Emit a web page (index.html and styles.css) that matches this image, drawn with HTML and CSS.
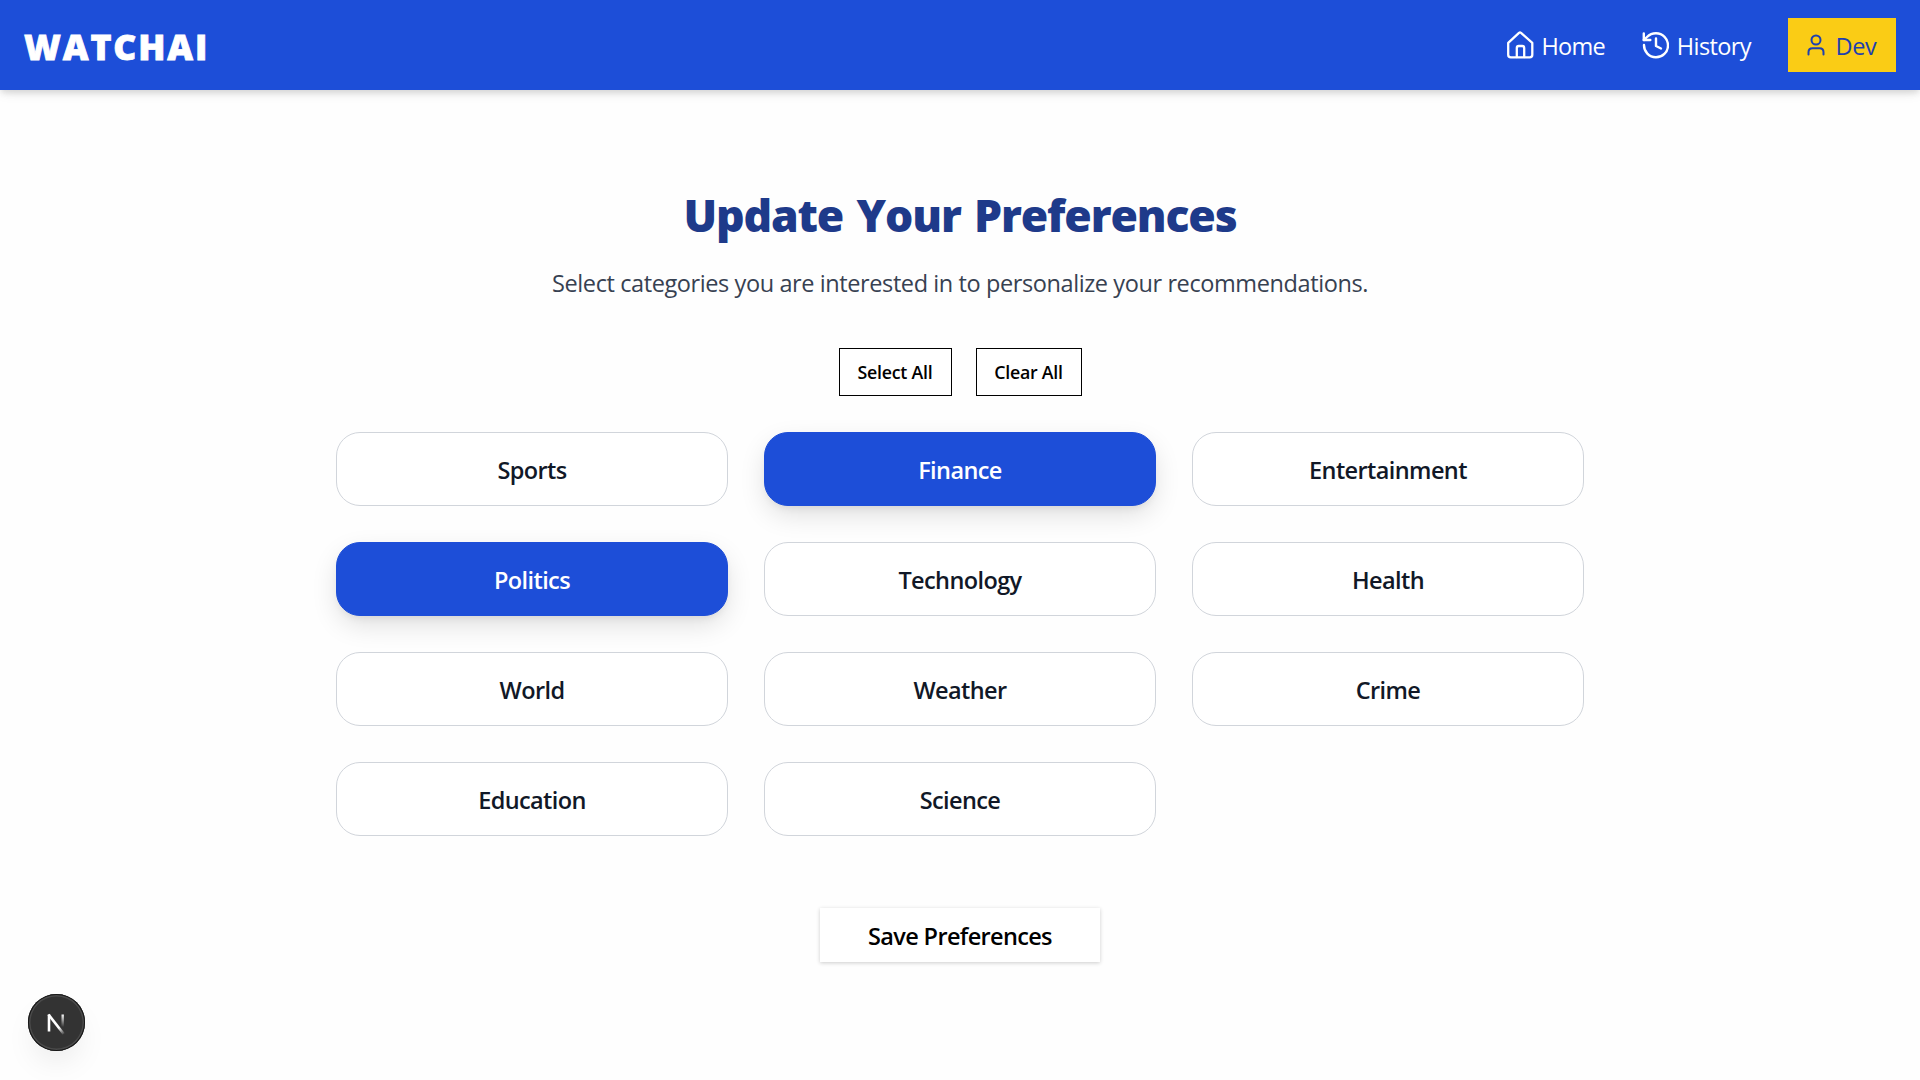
FILE: index.html
```html
<!DOCTYPE html>
<html lang="en">
<head>
<meta charset="utf-8">
<title>WatchAI</title>
<link rel="stylesheet" href="styles.css">
</head>
<body>
<header class="navbar">
  <a class="brand">WATCHAI</a>
  <nav class="nav-links">
    <a class="nav-link home">
      <svg class="nav-icon" viewBox="0 0 27 28" fill="none" stroke="currentColor" stroke-width="2.3" stroke-linecap="round" stroke-linejoin="round"><path d="M1.2 11.8 12 1.8q1-.8 2 0l11.300 10v12q0 2.600-2.600 2.600H3.800q-2.600 0-2.600-2.600z"/><path d="M9.800 26V17q0-2 2-2h3.400q2 0 2 2v9"/></svg>
      <span>Home</span>
    </a>
    <a class="nav-link history">
      <svg class="nav-icon" viewBox="0 0 27 28" fill="none" stroke="currentColor" stroke-width="2.400" stroke-linecap="round" stroke-linejoin="round"><path d="M2 14A12 12 0 1 0 14 2.300a13 13 0 0 0-9 3.700L1.800 9"/><path d="M1.800 2.500V9h6.500M14 7.500V15l5 2.500"/></svg>
      <span>History</span>
    </a>
    <a class="user-button">
      <svg class="user-icon" viewBox="0 0 18 22" fill="none" stroke="currentColor" stroke-width="2" stroke-linecap="round" stroke-linejoin="round"><circle cx="9" cy="6" r="4.500"/><path d="M1.500 20.500v-2.200q0-4 4-4h7q4 0 4 4v2.200"/></svg>
      <span>Dev</span>
    </a>
  </nav>
</header>
<main class="content">
  <h1 class="title">Update Your Preferences</h1>
  <p class="subtitle">Select categories you are interested in to personalize your recommendations.</p>
  <div class="bulk-actions">
    <button class="bulk-button select-all">Select All</button>
    <button class="bulk-button clear-all">Clear All</button>
  </div>
  <div class="categories">
    <button class="category">Sports</button>
    <button class="category selected">Finance</button>
    <button class="category">Entertainment</button>
    <button class="category selected">Politics</button>
    <button class="category">Technology</button>
    <button class="category">Health</button>
    <button class="category">World</button>
    <button class="category">Weather</button>
    <button class="category">Crime</button>
    <button class="category">Education</button>
    <button class="category">Science</button>
  </div>
  <button class="save">Save Preferences</button>
</main>
<div class="dev-badge">
  <svg viewBox="0 0 57 57" width="57" height="57" fill="none"><defs><linearGradient id="stem" x1="0" y1="20" x2="0" y2="33" gradientUnits="userSpaceOnUse"><stop stop-color="#fff"/><stop offset="1" stop-color="#fff" stop-opacity="0"/></linearGradient><linearGradient id="diag" x1="32" y1="33" x2="37" y2="40" gradientUnits="userSpaceOnUse"><stop stop-color="#fff"/><stop offset="1" stop-color="#fff" stop-opacity="0"/></linearGradient></defs><path d="M21 37.500V20.500" stroke="#fff" stroke-width="2.600"/><path d="M20.500 20.500 35.700 40" stroke="url(#diag)" stroke-width="2.600"/><path d="M33.500 20.500h2.400v13h-2.400z" fill="url(#stem)"/></svg>
</div>
</body>
</html>
```
FILE: styles.css
```css
* { box-sizing: border-box; }
body { margin: 0; height: 1080px; overflow: hidden; background: #fefefe; color: #111827; font-family: "Open Sans", "Noto Sans", sans-serif; }
button { font-family: inherit; padding: 0; }
.navbar { height: 90px; padding: 0 24px; display: flex; align-items: center; justify-content: space-between; background: #1d4ed8; color: #fff; box-shadow: 0 4px 6px -1px rgba(0,0,0,.1), 0 4px 12px -2px rgba(0,0,0,.1); }
.brand { font-size: 35.5px; font-weight: 800; line-height: 44px; padding-top: 2px; letter-spacing: 1.9px; -webkit-text-stroke: .8px #fff; }
.nav-links { display: flex; align-items: center; }
.nav-link { display: flex; align-items: center; gap: 7px; margin-right: 36px; font-size: 23.5px; letter-spacing: -.6px; }
.home { margin-right: 37px; letter-spacing: -.75px; }
.history { gap: 8px; margin-right: 37px; }
.nav-link span { padding-top: 2px; }
.nav-icon { width: 27px; height: 28px; }
.user-button { width: 108px; height: 54px; display: flex; align-items: center; justify-content: center; gap: 10px; background: #facc15; color: #1e40af; font-size: 23.5px; font-weight: 500; letter-spacing: -.3px; }
.user-button span { padding-top: 1px; }
.user-icon { width: 18px; height: 22px; }
.content { display: flex; flex-direction: column; align-items: center; padding-top: 95px; }
.title { margin: 0; font-size: 44.5px; line-height: 60px; font-weight: 800; letter-spacing: -1.15px; word-spacing: 3px; color: #1e3a8a; }
.subtitle { margin: 20px 0 0; font-size: 23.5px; line-height: 36px; letter-spacing: -.4px; color: #374151; }
.bulk-actions { display: flex; gap: 24px; margin-top: 47px; }
.bulk-button { height: 48px; background: #fff; border: 1px solid #000; color: #000; font-size: 17.8px; font-weight: 600; letter-spacing: -.25px; }
.select-all { width: 113px; }
.clear-all { width: 106px; }
.categories { display: grid; grid-template-columns: repeat(3, 392px); gap: 36px; margin-top: 36px; }
.category { height: 74px; padding-top: 2px; border: 1px solid #d1d5db; border-radius: 24px; background: #fff; color: #111827; font-size: 23.5px; font-weight: 600; letter-spacing: -.6px; }
.selected { border-color: #1d4ed8; background: #1d4ed8; color: #fff; box-shadow: 0 10px 28px -3px rgba(0,0,0,.14), 0 4px 10px -4px rgba(0,0,0,.1); }
.save { width: 280px; height: 54px; padding-top: 2px; margin-top: 72px; border: 0; background: #fff; color: #000; font-size: 23.5px; font-weight: 600; letter-spacing: -.65px; box-shadow: 0 1px 4px rgba(0,0,0,.2); }
.dev-badge { position: absolute; left: 28px; top: 994px; width: 57px; height: 57px; border-radius: 50%; background: #333; box-shadow: inset 0 0 0 1px #171717, inset 0 0 0 2.5px #4a4a4a, 0 16px 32px -8px rgba(0,0,0,.1); }
.dev-badge svg { display: block; }
```
